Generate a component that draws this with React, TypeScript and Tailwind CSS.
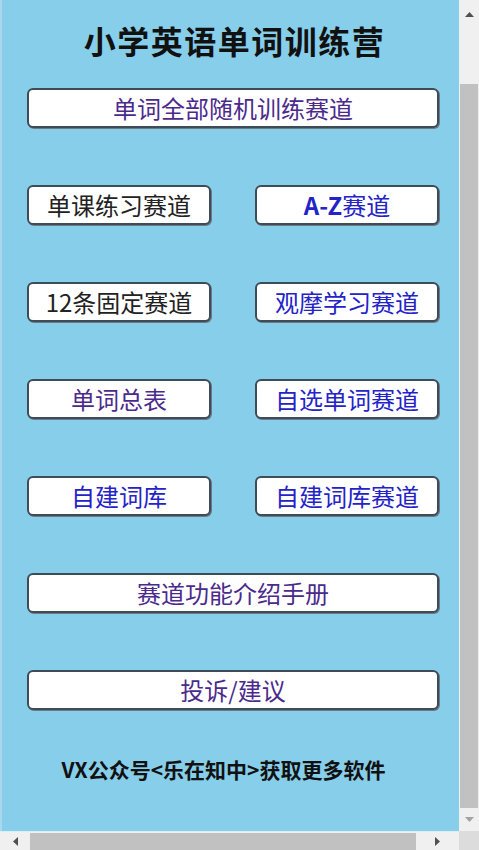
const PURPLE = "text-[#4b2a8c]";
const BLUE = "text-[#2323c8]";
const DARK = "text-[#222222]";

function Btn({ label, color }: { label: React.ReactNode; color: string }) {
  return (
    <button
      className={`h-[40px] w-full rounded-[6px] border-2 border-[#3e4c58] bg-white text-[24px] leading-none shadow-[1px_1px_0_#6b7a86] ${color}`}
    >
      {label}
    </button>
  );
}

export default function App() {
  return (
    <div
      className="flex h-[850px] w-[479px] flex-col overflow-hidden bg-[#f0f0f0]"
      style={{ fontFamily: '"Noto Sans CJK SC", "Liberation Sans", sans-serif' }}
    >
      <div className="flex h-[831px]">
        <main className="flex w-[459px] flex-col border-l-2 border-[#a9d8ee] bg-[#87ceeb]">
          <h1 className="mt-[18px] h-[44px] pl-[8px] text-center text-[32px] font-bold leading-[44px] tracking-[1.5px] text-[#111]">
            小学英语单词训练营
          </h1>
          <div className="mt-[26px] flex flex-col gap-[57px] pl-[25px] pr-[20px]">
            <Btn label="单词全部随机训练赛道" color={PURPLE} />
            <div className="grid grid-cols-2 gap-[44px]">
              <Btn label="单课练习赛道" color={DARK} />
              <Btn
                label={
                  <>
                    <span className="font-bold">A-Z</span>赛道
                  </>
                }
                color={BLUE}
              />
            </div>
            <div className="grid grid-cols-2 gap-[44px]">
              <Btn label="12条固定赛道" color={DARK} />
              <Btn label="观摩学习赛道" color={BLUE} />
            </div>
            <div className="grid grid-cols-2 gap-[44px]">
              <Btn label="单词总表" color={PURPLE} />
              <Btn label="自选单词赛道" color={BLUE} />
            </div>
            <div className="grid grid-cols-2 gap-[44px]">
              <Btn label="自建词库" color={BLUE} />
              <Btn label="自建词库赛道" color={BLUE} />
            </div>
            <Btn label="赛道功能介绍手册" color={PURPLE} />
            <Btn label="投诉/建议" color={PURPLE} />
          </div>
          <p className="mt-[46px] pr-[14px] text-center text-[21px] font-bold leading-[26px] text-[#111]">
            VX公众号&lt;乐在知中&gt;获取更多软件
          </p>
        </main>
        {/* vertical scrollbar */}
        <div className="flex w-[20px] flex-col bg-[#f0f0f0]">
          <div className="flex h-[17px] items-end justify-center">
            <svg width="9" height="5" viewBox="0 0 9 5">
              <path d="M0 5 L4.5 0 L9 5 Z" fill="#505050" />
            </svg>
          </div>
          <div className="h-[67px]" />
          <div className="mx-[1px] h-[724px] bg-[#c1c1c1]" />
          <div className="flex flex-1 items-center justify-center">
            <svg width="9" height="5" viewBox="0 0 9 5">
              <path d="M0 0 L4.5 5 L9 0 Z" fill="#a3a3a3" />
            </svg>
          </div>
        </div>
      </div>
      {/* horizontal scrollbar */}
      <div className="flex h-[19px]">
        <div className="flex w-[459px] items-center border-t border-[#d8eef8] bg-[#f0f0f0]">
          <div className="flex w-[30px] items-center justify-center">
            <svg width="5" height="9" viewBox="0 0 5 9">
              <path d="M5 0 L0 4.5 L5 9 Z" fill="#505050" />
            </svg>
          </div>
          <div className="h-[17px] w-[386px] bg-[#c1c1c1]" />
          <div className="flex flex-1 items-center justify-center">
            <svg width="5" height="9" viewBox="0 0 5 9">
              <path d="M0 0 L5 4.5 L0 9 Z" fill="#505050" />
            </svg>
          </div>
        </div>
        <div className="w-[20px] bg-[#dcdcdc]" />
      </div>
    </div>
  );
}
